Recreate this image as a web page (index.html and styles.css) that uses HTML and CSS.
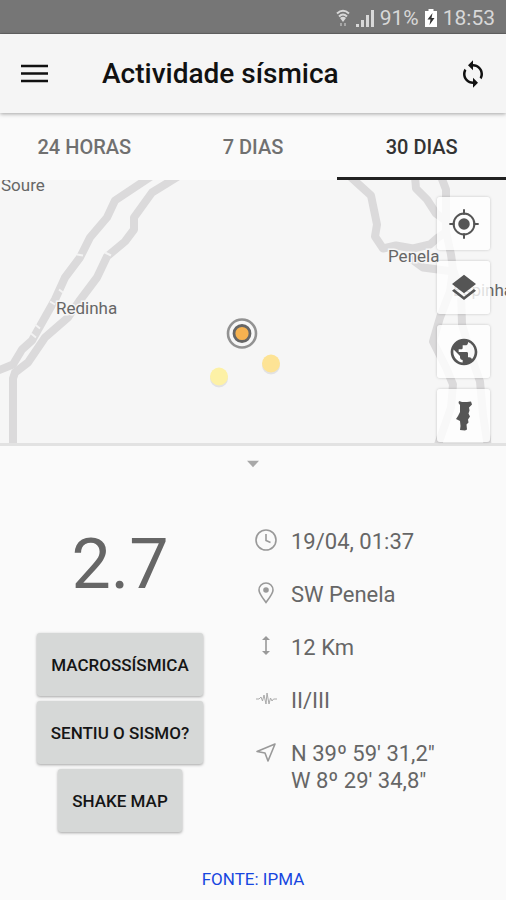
FILE: index.html
```html
<!DOCTYPE html>
<html lang="pt">
<head>
<meta charset="utf-8">
<meta name="viewport" content="width=device-width, initial-scale=1">
<title>Actividade sísmica</title>
<link rel="stylesheet" href="styles.css">
</head>
<body>
<div class="app">
  <div class="status">
    <svg class="status-wifi" viewBox="0 0 14 18" aria-hidden="true">
      <path d="M1 4.500Q7 -1 13 4.500M3 7.500Q7 3.500 11 7.500" fill="none" stroke="currentColor" stroke-width="2"/>
      <path d="M4 9Q7 6.500 10 9L7 13z" fill="currentColor"/>
      <path d="M5 14v3M9 14v3" stroke="currentColor" stroke-width="2" opacity=".5"/>
    </svg>
    <svg class="status-signal" viewBox="0 0 18 18" aria-hidden="true">
      <path d="M0 18v-3h3v3zM5 18v-7h3v7zM10 18V6h3v12zM15 18V1h3v17z" fill="currentColor"/>
    </svg>
    <span>91%</span>
    <svg class="status-battery" viewBox="0 0 12 18" aria-hidden="true">
      <path d="M3.500 0h5v2H12v16H0V2h3.500z" fill="#fff"/>
      <path d="M7.500 4L2.500 10.500h3L4.500 16l5-7h-3z" fill="#333"/>
    </svg>
    <span>18:53</span>
  </div>

  <header class="bar">
    <button class="icon-button" type="button" aria-label="Menu">
      <svg class="icon-menu" viewBox="0 0 28 20" aria-hidden="true">
        <path d="M0 2h27M0 9.500h27M0 17h27" fill="none" stroke="currentColor" stroke-width="2.600"/>
      </svg>
    </button>
    <h1>Actividade sísmica</h1>
    <button class="icon-button" type="button" aria-label="Actualizar">
      <svg class="icon-sync" viewBox="0 0 24 24" aria-hidden="true">
        <path fill="currentColor" d="M12 4V1L8 5l4 4V6c3.310 0 6 2.690 6 6 0 1.010-.25 1.970-.7 2.800l1.460 1.460C19.540 15.030 20 13.570 20 12c0-4.420-3.580-8-8-8zm0 14c-3.310 0-6-2.690-6-6 0-1.010.25-1.970.7-2.800L5.240 7.740C4.460 8.970 4 10.430 4 12c0 4.420 3.580 8 8 8v3l4-4-4-4v3z"/>
      </svg>
    </button>
  </header>

  <div class="tabs" role="tablist">
    <button type="button" role="tab" aria-selected="false">24 HORAS</button>
    <button type="button" role="tab" aria-selected="false">7 DIAS</button>
    <button type="button" role="tab" aria-selected="true">30 DIAS</button>
  </div>

  <main class="map">
    <svg class="map-canvas" viewBox="0 0 506 264" preserveAspectRatio="xMidYMid slice">
      <g class="roads">
        <path d="M151-3L115 21L107 38L90 58L80 78L65 98L55 120L37 152L32 161L22 170L13 185L-2 191"/>
        <path d="M178-3L152 13L134 38L134 50L125 62L107 77L97 98L79 122L68 138L45 158L28 183L15 193L13 199V267"/>
        <path d="M349-4L371 16L377 45L375 57L383 69L396 66L413 69L430 65L438 58L447 52"/>
        <path d="M408 77L423 88L453 92"/>
        <path d="M415-3L416 9L427 20L436 34L447 42"/>
        <path d="M441-3L446 10V52L451 75L453 90L461 112L462 145L473 182L480 202L483 235L488 268"/>
        <path d="M453 90L450 112L440 138L433 162L446 188L453 205L451 228L437 268"/>
      </g>
      <g class="crossings">
        <path d="M77 75l6 1M105 73l6 3M59 110l4 3M50 122l5 3M35 145l5 4M31 154l5 4"/>
      </g>
      <g class="places">
        <text x="1" y="11">Soure</text>
        <text x="56" y="134">Redinha</text>
        <text x="388" y="82">Penela</text>
        <text x="453" y="116">Espinhal</text>
      </g>
      <g class="shadow">
        <circle cx="271" cy="186" r="9"/>
        <circle cx="219" cy="199" r="9"/>
      </g>
      <circle cx="271" cy="184" r="9" fill="#fde395"/>
      <circle cx="219" cy="197" r="9" fill="#fdf1a6"/>
      <circle cx="242" cy="154" r="14" fill="#f7f7f7" stroke="#929292" stroke-width="2.600"/>
      <circle cx="242" cy="154" r="8" fill="#f6b250" stroke="#666" stroke-width="2.800"/>
    </svg>

    <div class="map-tools">
      <button type="button" aria-label="A minha localização">
        <svg viewBox="0 0 24 24" aria-hidden="true"><circle cx="12" cy="12" r="4.300" fill="currentColor"/><path d="M12 1v4M12 19v4M1 12h4M19 12h4" stroke="currentColor" stroke-width="1.500"/><circle cx="12" cy="12" r="7.800" fill="none" stroke="currentColor" stroke-width="1.500"/></svg>
      </button>
      <button type="button" aria-label="Camadas">
        <svg viewBox="0 0 24 24" aria-hidden="true"><path fill="currentColor" d="M11.990 18.540l-7.370-5.730L3 14.070l9 7 9-7-1.630-1.270-7.380 5.740zM12 16l7.360-5.730L21 9l-9-7-9 7 1.630 1.270L12 16z"/></svg>
      </button>
      <button type="button" aria-label="Mundo">
        <svg viewBox="0 0 24 24" aria-hidden="true"><path fill="currentColor" d="M12 2C6.480 2 2 6.480 2 12s4.480 10 10 10 10-4.480 10-10S17.520 2 12 2zm-1 17.930c-3.950-.49-7-3.850-7-7.930 0-.62.080-1.210.21-1.790L9 15v1c0 1.100.9 2 2 2v1.930zm6.900-2.540c-.26-.81-1-1.390-1.900-1.390h-1v-3c0-.55-.45-1-1-1H8v-2h2c.55 0 1-.45 1-1V7h2c1.100 0 2-.9 2-2v-.41c2.930 1.190 5 4.060 5 7.410 0 2.080-.8 3.970-2.100 5.390z"/></svg>
      </button>
      <button type="button" aria-label="Portugal">
        <svg viewBox="0 0 32 32" aria-hidden="true"><path fill="currentColor" d="M11 1l3 1h5l4-.500 1 3-3 3 .500 3-1 3 1.500 3-2 3 .500 3-2 2 .500 5-2 1-5-.500.500-4-.500-5-4-2 2-3 2-4v-7l-1.500-2z"/></svg>
      </button>
    </div>
  </main>

  <section class="panel">
    <button class="collapse" type="button" aria-label="Fechar detalhes"></button>
    <div class="event">
      <div class="summary">
        <p class="magnitude">2.7</p>
        <div class="actions">
          <button type="button">MACROSSÍSMICA</button>
          <button type="button">SENTIU O SISMO?</button>
          <button type="button">SHAKE MAP</button>
        </div>
      </div>
      <ul class="details">
        <li>
          <svg viewBox="0 0 24 24" aria-hidden="true"><circle cx="12" cy="12" r="10"/><path d="M12 6v6.500l4.500 2"/></svg>
          <span>19/04, 01:37</span>
        </li>
        <li>
          <svg viewBox="0 0 24 24" aria-hidden="true"><path d="M12 21.500C8 16 5 12.500 5 9a7 7 0 0 1 14 0c0 3.500-3 7-7 12.500z"/><circle cx="12" cy="9" r="2" fill="currentColor"/></svg>
          <span>SW Penela</span>
        </li>
        <li>
          <svg viewBox="0 0 24 24" aria-hidden="true"><path d="M12 4v16"/><path d="M12 2l4 4H8zM12 21l4-4H8z" fill="currentColor" stroke="none"/></svg>
          <span>12 Km</span>
        </li>
        <li>
          <svg class="wave" viewBox="0 0 24 24" aria-hidden="true"><path d="M2 12h3l2-2 1.500 4L10 8l2 9 1-11 2 11 1.500-6 1.500 3 1.500-2H23"/></svg>
          <span>II/III</span>
        </li>
        <li>
          <svg viewBox="0 0 24 24" aria-hidden="true"><path d="M21 4L3 11.500l8 1.500 3 8z" stroke-linejoin="round"/></svg>
          <span>N 39º 59' 31,2"<br>W 8º 29' 34,8"</span>
        </li>
      </ul>
    </div>
    <a class="source" href="#ipma">FONTE: IPMA</a>
  </section>
</div>
</body>
</html>
```
FILE: styles.css
```css
* {
  box-sizing: border-box;
}

body {
  margin: 0;
  background: #fafafa;
  color: #666;
  font-family: Roboto, "Liberation Sans", sans-serif;
}

button {
  margin: 0;
  padding: 0;
  border: 0;
  background: none;
  color: inherit;
  font: inherit;
}

svg {
  display: block;
  flex: none;
}

.app {
  display: flex;
  flex-direction: column;
  min-height: 100vh;
}

.status {
  display: flex;
  align-items: center;
  justify-content: flex-end;
  gap: 6px;
  height: 34px;
  padding: 2px 11px 0 0;
  border-bottom: 1px solid #666;
  background: #767676;
  color: #d8d8d8;
  font-size: 21px;
  line-height: 24px;
}

.status-wifi {
  width: 14px;
  height: 18px;
}

.status-signal {
  width: 18px;
  height: 18px;
}

.status-battery {
  width: 12px;
  height: 18px;
}

.bar {
  position: relative;
  display: flex;
  align-items: center;
  height: 79px;
  padding: 0 11px 0 13px;
  background: #f5f5f5;
  box-shadow: 0 1px 4px rgba(0, 0, 0, 0.35);
  color: #111;
}

.bar h1 {
  flex: 1;
  margin: 0;
  padding-left: 45px;
  font-size: 28px;
  font-weight: 500;
  line-height: 32px;
}

.icon-button {
  display: grid;
  place-items: center;
  width: 44px;
  height: 44px;
}

.icon-menu {
  width: 28px;
  height: 20px;
}

.icon-sync {
  width: 30px;
  height: 30px;
}

.tabs {
  display: grid;
  grid-template-columns: repeat(3, 1fr);
  height: 67px;
}

.tabs button {
  padding-top: 4px;
  border-bottom: 3px solid transparent;
  color: #707070;
  font-size: 20px;
  font-weight: 500;
}

.tabs [aria-selected="true"] {
  border-bottom-color: #212121;
  color: #333;
}

.map {
  position: relative;
  flex: 1 0 220px;
  border-bottom: 3px solid #e2e2e2;
  background: #f6f6f6;
}

.map-canvas {
  position: absolute;
  inset: 0;
  width: 100%;
  height: 100%;
}

.roads {
  fill: none;
  stroke: #dbdadb;
  stroke-width: 8px;
  stroke-linejoin: round;
}

.crossings {
  stroke: #f3f3f3;
  stroke-width: 2px;
}

.places {
  fill: #666;
  stroke: #f6f6f6;
  stroke-width: 3px;
  paint-order: stroke;
  font-size: 17px;
}

.shadow {
  fill: #000;
  opacity: 0.08;
}

.map-tools {
  position: absolute;
  top: 17px;
  right: 16px;
  display: grid;
  gap: 11px;
}

.map-tools button {
  display: grid;
  place-items: center;
  width: 53px;
  height: 53px;
  border-radius: 3px;
  background: rgba(255, 255, 255, 0.8);
  box-shadow: 0 0 3px rgba(0, 0, 0, 0.2);
  color: #555;
}

.map-tools svg {
  width: 32px;
  height: 32px;
}

.panel {
  display: flex;
  flex-direction: column;
  align-items: center;
  padding: 14px 0 10px;
}

.collapse {
  width: 12px;
  height: 8px;
  background: #a8a8a8;
  clip-path: polygon(0 10%, 100% 10%, 50% 90%);
}

.event {
  display: grid;
  grid-template-columns: 240px 1fr;
  width: 100%;
  margin: 55px 0 36px;
}

.summary {
  display: flex;
  flex-direction: column;
  align-items: center;
  gap: 28px;
}

.magnitude {
  margin: 0;
  font-size: 70px;
  line-height: 82px;
}

.actions {
  display: flex;
  flex-direction: column;
  align-items: center;
  gap: 5px;
}

.actions button {
  height: 63px;
  padding: 0 14px;
  border-radius: 3px;
  background: #d6d8d7;
  box-shadow: 0 1px 3px rgba(0, 0, 0, 0.35);
  color: #151515;
  font-size: 17px;
  font-weight: 500;
}

.details {
  display: grid;
  align-content: start;
  gap: 26px;
  margin: 0;
  padding: 5px 0 0 14px;
  list-style: none;
  font-size: 22px;
  line-height: 27px;
}

.details li {
  display: flex;
  gap: 13px;
}

.details svg {
  width: 24px;
  height: 24px;
  fill: none;
  stroke: currentColor;
  stroke-width: 1.6px;
  color: #999;
}

.details .wave {
  stroke-width: 1px;
  color: #aaa;
}

.source {
  color: #1746e0;
  font-size: 17px;
  line-height: 22px;
  text-decoration: none;
}
```
